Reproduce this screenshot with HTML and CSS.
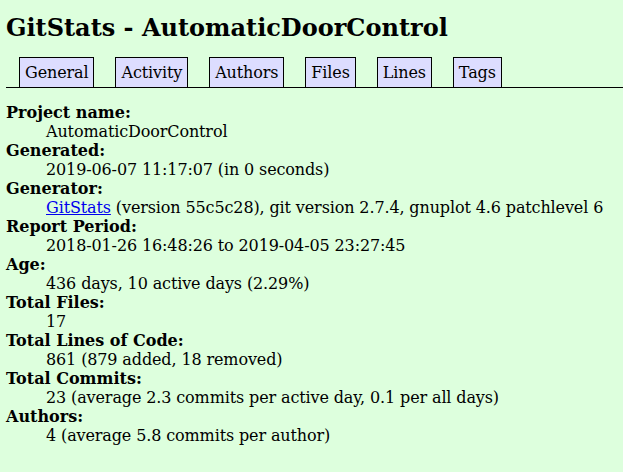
FILE: index.html
```html
<!DOCTYPE html>
<html>
<head>
<meta charset="utf-8">
<title>GitStats - AutomaticDoorControl</title>
<link rel="stylesheet" href="styles.css">
</head>
<body>
<div class="page">
<h1 class="title">GitStats - AutomaticDoorControl</h1>
<div class="nav">
<ul class="nav-list">
<li class="nav-item">General</li>
<li class="nav-item">Activity</li>
<li class="nav-item">Authors</li>
<li class="nav-item">Files</li>
<li class="nav-item">Lines</li>
<li class="nav-item">Tags</li>
</ul>
</div>
<dl class="info">
<dt>Project name:</dt><dd>AutomaticDoorControl</dd>
<dt>Generated:</dt><dd>2019-06-07 11:17:07 (in 0 seconds)</dd>
<dt>Generator:</dt><dd><a class="link" href="#">GitStats</a> (version 55c5c28), git version 2.7.4, gnuplot 4.6 patchlevel 6</dd>
<dt>Report Period:</dt><dd>2018-01-26 16:48:26 to 2019-04-05 23:27:45</dd>
<dt>Age:</dt><dd>436 days, 10 active days (2.29%)</dd>
<dt>Total Files:</dt><dd>17</dd>
<dt>Total Lines of Code:</dt><dd>861 (879 added, 18 removed)</dd>
<dt>Total Commits:</dt><dd>23 (average 2.3 commits per active day, 0.1 per all days)</dd>
<dt>Authors:</dt><dd>4 (average 5.8 commits per author)</dd>
</dl>
</div>
</body>
</html>
```

FILE: styles.css
```css
html, body {
  margin: 0;
  padding: 0;
  background-color: #ddffdd;
}
body {
  color: #000;
  font-family: "DejaVu Serif", serif;
  font-size: 16px;
  line-height: 19px;
}
.page {
  padding-left: 6px;
}
.title {
  margin: 14px 0 13px 0;
  font-size: 24px;
  line-height: 28px;
  font-weight: bold;
}
.nav {
  height: 32px;
  border-bottom: 1px solid #000;
  display: flex;
  align-items: flex-end;
  padding-left: 13px;
}
.nav-list {
  list-style: none;
  margin: 0;
  padding: 0;
  display: flex;
  gap: 21px;
}
.nav-item {
  background-color: #ddddff;
  border: 1px solid #000;
  border-bottom: 0;
  padding: 5px 5px;
  height: 19px;
  letter-spacing: -0.125px;
}
.info {
  margin: 15px 0 0 0;
}
.info dt {
  font-weight: bold;
}
.info dd {
  margin-left: 40px;
  letter-spacing: -0.125px;
}
.link {
  color: #0000ee;
  text-decoration: underline;
}
```
